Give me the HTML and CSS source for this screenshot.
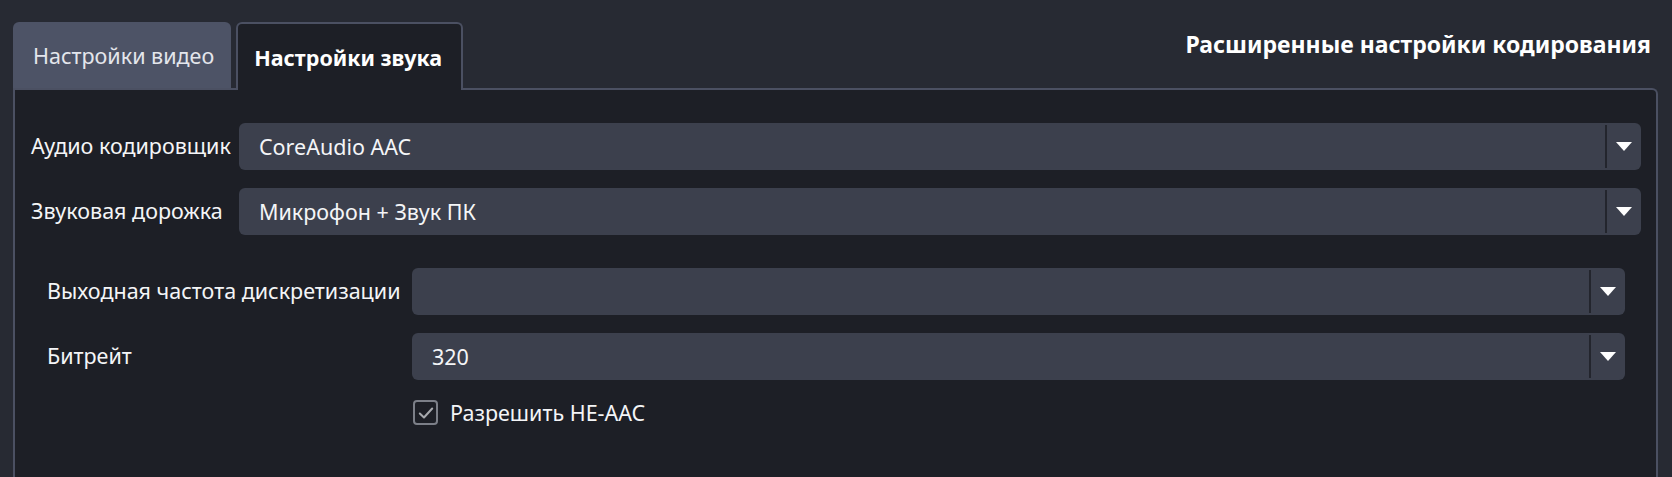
FILE: index.html
```html
<!DOCTYPE html>
<html lang="ru">
<head>
<meta charset="utf-8">
<title>Настройки звука</title>
<link rel="stylesheet" href="styles.css">
</head>
<body>
<div class="window">
  <div class="tabbar">
    <div class="tabs">
      <div class="tab">Настройки видео</div>
      <div class="tab active">Настройки звука</div>
    </div>
    <div class="heading">Расширенные настройки кодирования</div>
  </div>
  <div class="panel">
    <div class="form primary">
      <div class="label">Аудио кодировщик</div>
      <div class="combo"><span class="value">CoreAudio AAC</span><span class="arrow"></span></div>
      <div class="label">Звуковая дорожка</div>
      <div class="combo"><span class="value">Микрофон + Звук ПК</span><span class="arrow"></span></div>
    </div>
    <div class="form secondary">
      <div class="label">Выходная частота дискретизации</div>
      <div class="combo"><span class="value"></span><span class="arrow"></span></div>
      <div class="label">Битрейт</div>
      <div class="combo"><span class="value">320</span><span class="arrow"></span></div>
      <div class="check-row">
        <span class="checkbox">
          <svg width="18" height="18" viewBox="0 0 16 16"><path d="M2.5 8.5 L6.2 12 L13.5 4" fill="none" stroke="#a7a9ae" stroke-width="1.8" stroke-linecap="round" stroke-linejoin="round"/></svg>
        </span>
        <span class="check-label">Разрешить HE-AAC</span>
      </div>
    </div>
  </div>
</div>
</body>
</html>
```
FILE: styles.css
```css
html, body {
  margin: 0;
  padding: 0;
  background: #272a33;
  overflow: hidden;
}
body {
  font-family: "Noto Sans", "Open Sans", sans-serif;
  color: #f2f3f5;
}
.window {
  padding: 0 14px 0 13px;
  height: 477px;
  display: flex;
  flex-direction: column;
}
.tabbar {
  display: flex;
  align-items: flex-start;
  justify-content: space-between;
  padding-top: 22px;
}
.tabs {
  display: flex;
  gap: 5px;
  align-items: flex-end;
}
.tab {
  height: 66px;
  box-sizing: border-box;
  padding: 0 17px 0 20px;
  display: flex;
  align-items: center;
  font-size: 21.5px;
  color: #e4e6ec;
  background: #4d5366;
  border-radius: 6px 6px 0 0;
}
.tab.active {
  position: relative;
  z-index: 1;
  height: 68px;
  margin-bottom: -2px;
  padding: 0 19px 0 16px;
  background: #1d1f26;
  border: 2px solid #4b5062;
  border-bottom: none;
  font-weight: 700;
  color: #ffffff;
}
.heading {
  font-size: 23px;
  font-weight: 700;
  color: #ffffff;
  margin-top: 6px;
  margin-right: 7px;
}
.panel {
  flex: 1;
  background: #1d1f26;
  border: 2px solid #4b5062;
  border-bottom: none;
  border-radius: 0 6px 0 0;
  padding: 33px 15px 0 16px;
}
.form {
  display: grid;
  grid-auto-rows: 47px;
  row-gap: 18px;
  align-items: center;
}
.form.primary {
  grid-template-columns: 208px 1fr;
}
.form.secondary {
  grid-template-columns: 365px 1fr;
  margin-top: 33px;
  padding: 0 16px;
}
.label {
  font-size: 21.5px;
  color: #f4f5f7;
  margin-top: -3px;
  white-space: nowrap;
}
.combo {
  height: 47px;
  background: #3c404d;
  border-radius: 6px;
  display: flex;
  align-items: center;
}
.value {
  flex: 1;
  padding-left: 20px;
  font-size: 21.5px;
  color: #f4f5f7;
}
.arrow {
  width: 34px;
  height: 43px;
  border-left: 2px solid #23252d;
  display: flex;
  align-items: center;
  justify-content: center;
}
.arrow::after {
  content: "";
  width: 0;
  height: 0;
  border-left: 8px solid transparent;
  border-right: 8px solid transparent;
  border-top: 9px solid #ffffff;
}
.check-row {
  grid-column: 2;
  display: flex;
  align-items: center;
  gap: 12px;
  height: 25px;
  margin-top: 2px;
  align-self: start;
}
.checkbox {
  width: 25px;
  height: 25px;
  box-sizing: border-box;
  border: 2px solid #7c7f88;
  border-radius: 4px;
  display: flex;
  align-items: center;
  justify-content: center;
  margin-left: 1px;
}
.check-label {
  font-size: 21.5px;
  color: #f4f5f7;
}
```
